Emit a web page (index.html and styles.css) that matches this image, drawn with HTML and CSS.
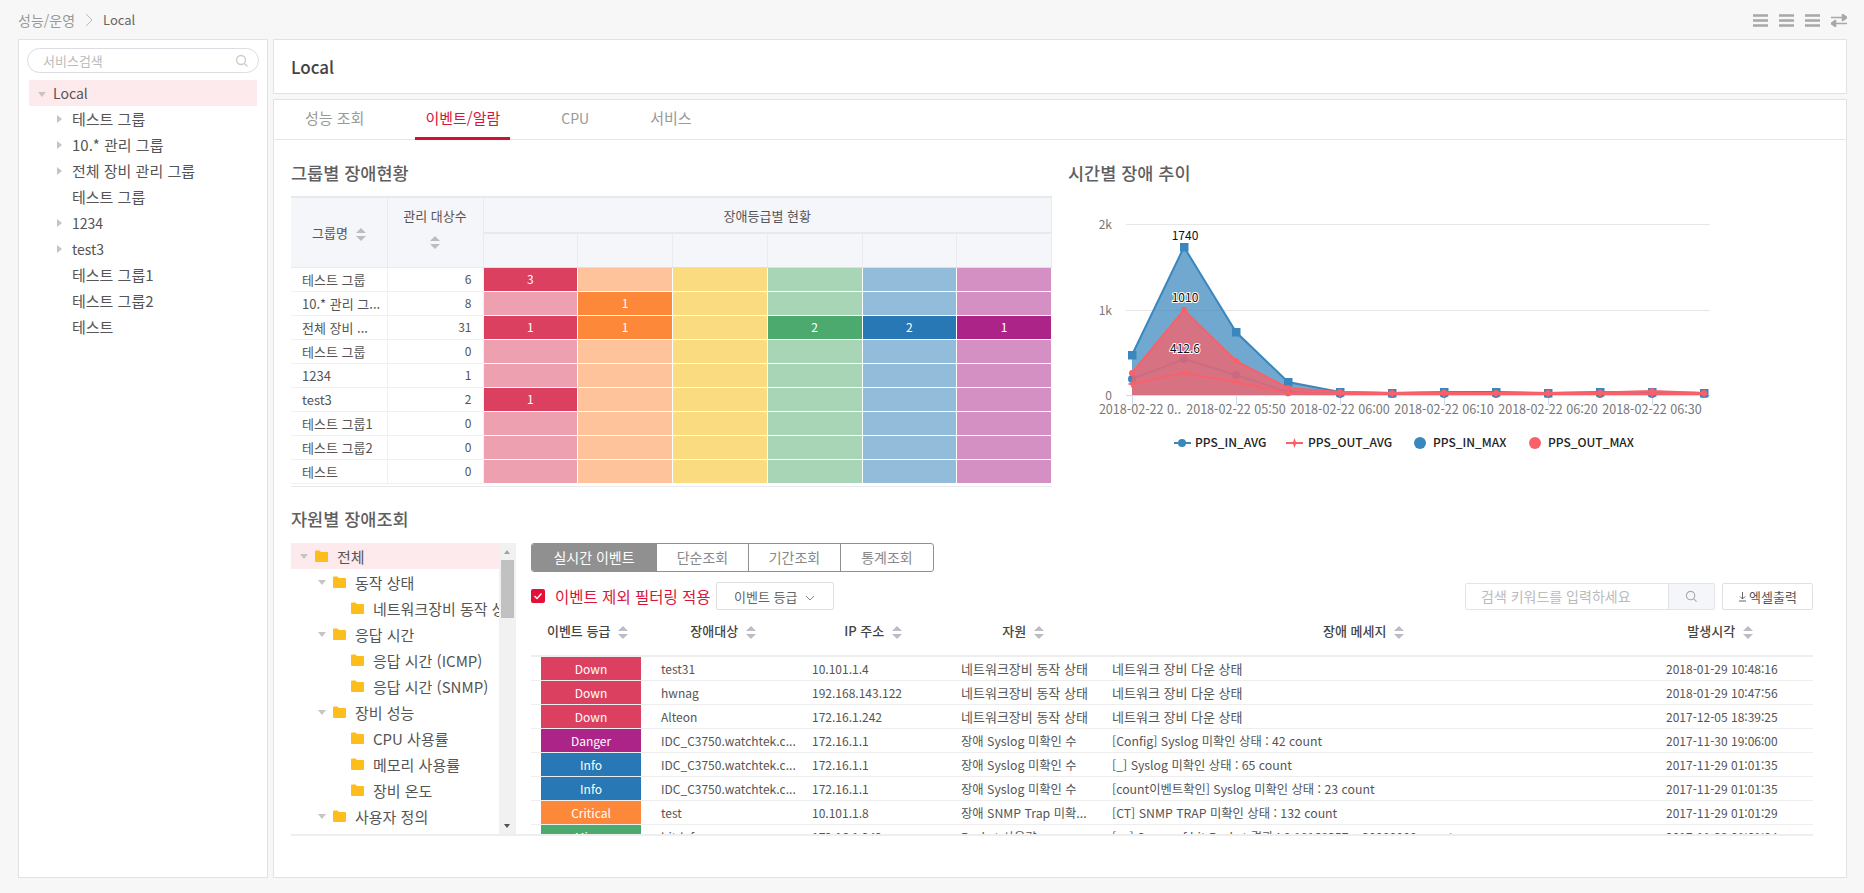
FILE: index.html
```html
<!DOCTYPE html>
<html lang="ko">
<head>
    <meta charset="UTF-8">
    <title>성능/운영 - Local</title>
    <link rel="stylesheet" href="styles.css">
</head>
<body>

<header class="topbar">
    <div class="crumbs">
        <span>성능/운영</span>
        <svg class="crumb-sep" width="8" height="14" viewBox="0 0 8 14"><path d="M1 1l6 6-6 6" fill="none" stroke="#bbb"/></svg>
        <span class="crumb-now">Local</span>
    </div>
    <div class="view-icons">
        <svg width="15" height="13" viewBox="0 0 15 13"><path d="M0 1.500h15M0 6.500h15M0 11.500h15" stroke="#a8a8a8" stroke-width="2.400"/></svg>
        <svg width="15" height="13" viewBox="0 0 15 13"><path d="M0 1.500h15M0 6.500h15M0 11.500h15" stroke="#a8a8a8" stroke-width="2.400"/></svg>
        <svg width="15" height="13" viewBox="0 0 15 13"><path d="M0 1.500h15M0 6.500h15M0 11.500h15" stroke="#a8a8a8" stroke-width="2.400"/></svg>
        <svg width="16" height="13" viewBox="0 0 16 13"><path d="M0 3.500h12M16 3.500l-4.500-3v6zM16 9.500H4M0 9.500l4.500-3v6z" fill="#a8a8a8" stroke="#a8a8a8" stroke-width="1.600" stroke-linejoin="round"/></svg>
    </div>
</header>

<div class="layout">
    <aside class="side panel">
        <div class="side-search">
            <span>서비스검색</span>
            <svg width="14" height="14" viewBox="0 0 14 14"><circle cx="6" cy="6" r="4.500" fill="none" stroke="#ccc" stroke-width="1.300"/><path d="M9.500 9.500l3 3" stroke="#ccc" stroke-width="1.300"/></svg>
        </div>
        <ul class="svc-tree">
            <li class="svc-root"><i class="caret-down"></i>Local</li>
            <li><i class="caret-right"></i>테스트 그룹</li>
            <li><i class="caret-right"></i>10.* 관리 그룹</li>
            <li><i class="caret-right"></i>전체 장비 관리 그룹</li>
            <li>테스트 그룹</li>
            <li class="en"><i class="caret-right"></i>1234</li>
            <li class="en"><i class="caret-right"></i>test3</li>
            <li>테스트 그룹1</li>
            <li>테스트 그룹2</li>
            <li>테스트</li>
        </ul>
    </aside>

    <main class="main">
        <div class="page-title panel"><h1>Local</h1></div>

        <div class="content panel">
            <nav class="tabs">
                <a>성능 조회</a>
                <a class="on">이벤트/알람</a>
                <a class="tab-en">CPU</a>
                <a>서비스</a>
            </nav>

            <div class="body">
                <div class="top-row">
                    <section class="group-status">
                        <h2>그룹별 장애현황</h2>
                        <div class="heat-wrap">
                            <table class="heat">
                                <thead>
                                    <tr>
                                        <th rowspan="2">그룹명 <i class="sort"></i></th>
                                        <th rowspan="2" class="th-wrap">관리 대상수<i class="sort sort-block"></i></th>
                                        <th colspan="6" class="th-span">장애등급별 현황</th>
                                    </tr>
                                    <tr class="th-empty"><th></th><th></th><th></th><th></th><th></th><th></th></tr>
                                </thead>
                                <tbody>
                                    <tr><td>테스트 그룹</td><td class="num">6</td><td class="down">3</td><td class="l-crit"></td><td class="l-major"></td><td class="l-minor"></td><td class="l-info"></td><td class="l-danger"></td></tr>
                                    <tr><td>10.* 관리 그...</td><td class="num">8</td><td class="l-down"></td><td class="crit">1</td><td class="l-major"></td><td class="l-minor"></td><td class="l-info"></td><td class="l-danger"></td></tr>
                                    <tr><td>전체 장비 ...</td><td class="num">31</td><td class="down">1</td><td class="crit">1</td><td class="l-major"></td><td class="minor">2</td><td class="info">2</td><td class="danger">1</td></tr>
                                    <tr><td>테스트 그룹</td><td class="num">0</td><td class="l-down"></td><td class="l-crit"></td><td class="l-major"></td><td class="l-minor"></td><td class="l-info"></td><td class="l-danger"></td></tr>
                                    <tr><td>1234</td><td class="num">1</td><td class="l-down"></td><td class="l-crit"></td><td class="l-major"></td><td class="l-minor"></td><td class="l-info"></td><td class="l-danger"></td></tr>
                                    <tr><td>test3</td><td class="num">2</td><td class="down">1</td><td class="l-crit"></td><td class="l-major"></td><td class="l-minor"></td><td class="l-info"></td><td class="l-danger"></td></tr>
                                    <tr><td>테스트 그룹1</td><td class="num">0</td><td class="l-down"></td><td class="l-crit"></td><td class="l-major"></td><td class="l-minor"></td><td class="l-info"></td><td class="l-danger"></td></tr>
                                    <tr><td>테스트 그룹2</td><td class="num">0</td><td class="l-down"></td><td class="l-crit"></td><td class="l-major"></td><td class="l-minor"></td><td class="l-info"></td><td class="l-danger"></td></tr>
                                    <tr><td>테스트</td><td class="num">0</td><td class="l-down"></td><td class="l-crit"></td><td class="l-major"></td><td class="l-minor"></td><td class="l-info"></td><td class="l-danger"></td></tr>
                                </tbody>
                            </table>
                        </div>
                    </section>

                    <section class="trend">
                        <h2>시간별 장애 추이</h2>
                        <svg class="chart" width="660" height="270" viewBox="1068 196 660 270">
                            <defs>
                                <marker id="m-square" markerUnits="userSpaceOnUse" markerWidth="9" markerHeight="9" refX="4.500" refY="4.500"><rect width="9" height="9" fill="#3a87be"/></marker>
                                <marker id="m-dot" markerUnits="userSpaceOnUse" markerWidth="9" markerHeight="9" refX="4.500" refY="4.500"><circle cx="4.500" cy="4.500" r="4" fill="#3a87be"/></marker>
                                <marker id="m-red" markerUnits="userSpaceOnUse" markerWidth="9" markerHeight="9" refX="4.500" refY="4.500"><circle cx="4.500" cy="4.500" r="3" fill="#fa6069"/></marker>
                                <marker id="m-star" markerUnits="userSpaceOnUse" markerWidth="9" markerHeight="9" refX="4.500" refY="4.500"><path d="M4.500 0l1.200 3.300 3.300 1.200-3.300 1.200-1.200 3.300-1.200-3.300L0 4.500l3.300-1.200z" fill="#fa6069"/></marker>
                            </defs>
                            <g class="grid">
                                <path d="M1126 224.500h584M1126 310.500h584"/>
                                <path class="axis" d="M1126 395.500h584M1132.500 395v10M1236.500 395v10M1340.500 395v10M1444.500 395v10M1548.500 395v10M1652.500 395v10"/>
                            </g>
                            <g class="ax-y">
                                <text x="1112" y="229" text-anchor="end">2k</text>
                                <text x="1112" y="315" text-anchor="end">1k</text>
                                <text x="1112" y="400" text-anchor="end">0</text>
                            </g>
                            <g class="ax-x">
                                <text x="1140" y="414">2018-02-22 0..</text>
                                <text x="1236" y="414">2018-02-22 05:50</text>
                                <text x="1340" y="414">2018-02-22 06:00</text>
                                <text x="1444" y="414">2018-02-22 06:10</text>
                                <text x="1548" y="414">2018-02-22 06:20</text>
                                <text x="1652" y="414">2018-02-22 06:30</text>
                            </g>
                            <polygon class="area-blue" points="1132,395 1132,355 1184,247 1236,332 1288,382 1340,392 1392,393 1444,392 1496,392 1548,393 1600,392 1652,392 1704,393 1704,395"/>
                            <polyline class="line-blue" marker-start="url(#m-square)" marker-mid="url(#m-square)" marker-end="url(#m-square)" points="1132,355 1184,247 1236,332 1288,382 1340,392 1392,393 1444,392 1496,392 1548,393 1600,392 1652,392 1704,393"/>
                            <polyline class="line-avg" marker-start="url(#m-dot)" marker-mid="url(#m-dot)" marker-end="url(#m-dot)" points="1132,379 1184,359 1236,375 1288,392 1340,394 1392,394 1444,394 1496,394 1548,394 1600,394 1652,394 1704,394"/>
                            <polyline class="line-star" marker-start="url(#m-star)" marker-mid="url(#m-star)" marker-end="url(#m-star)" points="1132,384 1184,373 1236,382 1288,393 1340,394 1392,394 1444,394 1496,394 1548,394 1600,394 1652,394 1704,394"/>
                            <polygon class="area-red" points="1132,395 1132,373 1184,310 1236,361 1288,388 1340,392 1392,393 1444,392.500 1496,393 1548,393 1600,392.500 1652,391 1704,393 1704,395"/>
                            <polyline class="line-red" marker-start="url(#m-red)" marker-mid="url(#m-red)" marker-end="url(#m-red)" points="1132,373 1184,310 1236,361 1288,388 1340,392 1392,393 1444,392.500 1496,393 1548,393 1600,392.500 1652,391 1704,393"/>
                            <g class="peak">
                                <text x="1185" y="240">1740</text>
                                <text class="halo" x="1185" y="302">1010</text>
                                <text class="halo" x="1185" y="353">412.6</text>
                            </g>
                            <g class="legend">
                                <path d="M1174 443h17" stroke="#3a87be" stroke-width="2"/><circle cx="1182" cy="443" r="4" fill="#3a87be"/>
                                <text x="1195" y="447">PPS_IN_AVG</text>
                                <path d="M1286 443h17" stroke="#fa6069" stroke-width="2"/><path d="M1294.500 438l1.300 3.700 3.700 1.300-3.700 1.300-1.300 3.700-1.300-3.700-3.700-1.300 3.700-1.300z" fill="#fa6069"/>
                                <text x="1308" y="447">PPS_OUT_AVG</text>
                                <circle cx="1420" cy="443" r="6" fill="#3a87be"/>
                                <text x="1433" y="447">PPS_IN_MAX</text>
                                <circle cx="1535" cy="443" r="6" fill="#fa6069"/>
                                <text x="1548" y="447">PPS_OUT_MAX</text>
                            </g>
                        </svg>
                    </section>
                </div>

                <section class="resource">
                    <h2>자원별 장애조회</h2>
                    <div class="res-body">
                        <div class="res-tree">
                            <ul class="folder-tree">
                                <li class="res-root d0"><i class="caret-down"></i><svg class="folder"><use href="#folder"/></svg>전체</li>
                                <li class="d1"><i class="caret-down"></i><svg class="folder"><use href="#folder"/></svg>동작 상태</li>
                                <li class="d2"><svg class="folder"><use href="#folder"/></svg>네트워크장비 동작 상태</li>
                                <li class="d1"><i class="caret-down"></i><svg class="folder"><use href="#folder"/></svg>응답 시간</li>
                                <li class="d2"><svg class="folder"><use href="#folder"/></svg>응답 시간 (ICMP)</li>
                                <li class="d2"><svg class="folder"><use href="#folder"/></svg>응답 시간 (SNMP)</li>
                                <li class="d1"><i class="caret-down"></i><svg class="folder"><use href="#folder"/></svg>장비 성능</li>
                                <li class="d2"><svg class="folder"><use href="#folder"/></svg>CPU 사용률</li>
                                <li class="d2"><svg class="folder"><use href="#folder"/></svg>메모리 사용률</li>
                                <li class="d2"><svg class="folder"><use href="#folder"/></svg>장비 온도</li>
                                <li class="d1"><i class="caret-down"></i><svg class="folder"><use href="#folder"/></svg>사용자 정의</li>
                            </ul>
                            <div class="scrollbar">
                                <i class="arrow-up"></i>
                                <div class="thumb"></div>
                                <i class="arrow-down"></i>
                            </div>
                        </div>

                        <div class="events">
                            <div class="ev-tabs">
                                <a class="on">실시간 이벤트</a>
                                <a>단순조회</a>
                                <a>기간조회</a>
                                <a>통계조회</a>
                            </div>
                            <div class="ev-filter">
                                <span class="check"><svg width="10" height="10" viewBox="0 0 10 10"><path d="M1.500 5l2.500 2.500 4.500-5" fill="none" stroke="#fff" stroke-width="1.300"/></svg></span>
                                <span class="check-label">이벤트 제외 필터링 적용</span>
                                <button class="grade-btn">이벤트 등급
                                    <svg width="10" height="6" viewBox="0 0 10 6"><path d="M1 1l4 4 4-4" fill="none" stroke="#888"/></svg>
                                </button>
                                <div class="ev-search">
                                    <span class="ev-input">검색 키워드를 입력하세요</span>
                                    <span class="ev-go"><svg width="13" height="13" viewBox="0 0 14 14"><circle cx="6" cy="6" r="4.500" fill="none" stroke="#aaa" stroke-width="1.200"/><path d="M9.500 9.500l3 3" stroke="#aaa" stroke-width="1.200"/></svg></span>
                                </div>
                                <button class="excel-btn">
                                    <svg width="9" height="11" viewBox="0 0 9 11"><path d="M4.500 1v7M2 5.500l2.500 2.500L7 5.500M1 10h7" fill="none" stroke="#666"/></svg>엑셀출력
                                </button>
                            </div>
                            <div class="ev-table-wrap">
                                <table class="ev-table">
                                    <colgroup>
                                        <col class="c-grade"><col class="c-target"><col class="c-ip"><col class="c-res"><col class="c-msg"><col class="c-time">
                                    </colgroup>
                                    <thead>
                                        <tr>
                                            <th>이벤트 등급 <i class="sort"></i></th>
                                            <th>장애대상 <i class="sort"></i></th>
                                            <th>IP 주소 <i class="sort"></i></th>
                                            <th>자원 <i class="sort"></i></th>
                                            <th class="th-msg">장애 메세지 <i class="sort"></i></th>
                                            <th class="th-time">발생시각 <i class="sort"></i></th>
                                        </tr>
                                    </thead>
                                    <tbody>
                                        <tr><td><div class="badge down">Down</div></td><td>test31</td><td>10.101.1.4</td><td class="ko">네트워크장비 동작 상태</td><td class="ko">네트워크 장비 다운 상태</td><td>2018-01-29 10:48:16</td></tr>
                                        <tr><td><div class="badge down">Down</div></td><td>hwnag</td><td>192.168.143.122</td><td class="ko">네트워크장비 동작 상태</td><td class="ko">네트워크 장비 다운 상태</td><td>2018-01-29 10:47:56</td></tr>
                                        <tr><td><div class="badge down">Down</div></td><td>Alteon</td><td>172.16.1.242</td><td class="ko">네트워크장비 동작 상태</td><td class="ko">네트워크 장비 다운 상태</td><td>2017-12-05 18:39:25</td></tr>
                                        <tr><td><div class="badge danger">Danger</div></td><td>IDC_C3750.watchtek.c...</td><td>172.16.1.1</td><td class="mix">장애 Syslog 미확인 수</td><td class="mix">[Config] Syslog 미확인 상태 : 42 count</td><td>2017-11-30 19:06:00</td></tr>
                                        <tr><td><div class="badge info">Info</div></td><td>IDC_C3750.watchtek.c...</td><td>172.16.1.1</td><td class="mix">장애 Syslog 미확인 수</td><td class="mix">[_] Syslog 미확인 상태 : 65 count</td><td>2017-11-29 01:01:35</td></tr>
                                        <tr><td><div class="badge info">Info</div></td><td>IDC_C3750.watchtek.c...</td><td>172.16.1.1</td><td class="mix">장애 Syslog 미확인 수</td><td class="mix">[count이벤트확인] Syslog 미확인 상태 : 23 count</td><td>2017-11-29 01:01:35</td></tr>
                                        <tr><td><div class="badge crit">Critical</div></td><td>test</td><td>10.101.1.8</td><td class="mix">장애 SNMP Trap 미확...</td><td class="mix">[CT] SNMP TRAP 미확인 상태 : 132 count</td><td>2017-11-29 01:01:29</td></tr>
                                        <tr><td><div class="badge minor">Minor</div></td><td>bitdefs</td><td>172.16.1.242</td><td class="mix">Packet 사용량</td><td class="mix">[ps] Space of bit Packet 결과 : 0.18168357 &gt; 20000000 count</td><td>2017-11-29 01:01:04</td></tr>
                                    </tbody>
                                </table>
                            </div>
                        </div>
                    </div>
                </section>
            </div>
        </div>
    </main>
</div>

<svg class="defs" width="0" height="0">
    <symbol id="folder" viewBox="0 0 13 12">
        <path d="M0 1.500Q0 .5 1 .5h3.500l1.500 1.500h6q1 0 1 1V11q0 1-1 1H1q-1 0-1-1z" fill="#fdbd1c"/>
    </symbol>
</svg>

</body>
</html>
```

FILE: styles.css
```css
* {
    box-sizing: border-box;
}

html, body {
    height: 100%;
}

body {
    margin: 0;
    padding: 0 17px 15px 18px;
    overflow: hidden;
    display: flex;
    flex-direction: column;
    background-color: #f7f7f7;
    font-family: "Noto Sans CJK KR", "Noto Sans", sans-serif;
    font-size: 12px;
    color: #555;
}

ul {
    list-style: none;
    margin: 0;
    padding: 0;
}

h1, h2 {
    margin: 0;
    font-weight: 500;
}

button {
    font-family: inherit;
    cursor: pointer;
}

.defs {
    position: absolute;
}

.panel {
    background-color: #fff;
    border: 1px solid #e2e2e2;
}

/* topbar */
.topbar {
    height: 39px;
    flex: none;
    display: flex;
    align-items: center;
    justify-content: space-between;
}

.crumbs {
    display: flex;
    align-items: center;
    gap: 10px;
    font-size: 14px;
    color: #999;
}

.crumb-now {
    color: #666;
    font-size: 13px;
}

.view-icons {
    display: flex;
    align-items: center;
    gap: 11px;
    margin-top: 2px;
}

.layout {
    flex: 1;
    min-height: 0;
    display: flex;
    gap: 5px;
}

/* left tree */
.side {
    width: 250px;
    flex: none;
    padding: 8px;
}

.side-search {
    height: 25px;
    display: flex;
    align-items: center;
    justify-content: space-between;
    padding: 0 9px 0 15px;
    border: 1px solid #dcdce2;
    border-radius: 13px;
    color: #bbb;
    font-size: 13px;
}

.svc-tree {
    margin: 7px 2px 0;
}

.svc-tree li {
    position: relative;
    height: 26px;
    line-height: 26px;
    padding-left: 43px;
    font-size: 15px;
    color: #555;
}

.svc-tree .en {
    font-size: 14px;
}

.svc-tree .svc-root {
    padding-left: 24px;
    background-color: #fdeaec;
    font-size: 14px;
}

.svc-root .caret-down {
    top: 12px;
}

.caret-right, .caret-down {
    position: absolute;
    width: 0;
    height: 0;
}

.caret-right {
    left: 28px;
    top: 9px;
    border-left: 5px solid #c4c4c4;
    border-top: 4px solid transparent;
    border-bottom: 4px solid transparent;
}

.caret-down {
    left: 9px;
    top: 10px;
    border-top: 5px solid #c4c4c4;
    border-left: 4px solid transparent;
    border-right: 4px solid transparent;
}

.main {
    flex: 1;
    min-width: 0;
    display: flex;
    flex-direction: column;
    gap: 5px;
}

.page-title {
    height: 55px;
    flex: none;
    display: flex;
    align-items: center;
    padding-left: 17px;
}

.page-title h1 {
    font-size: 17px;
    color: #444;
}

.content {
    flex: 1;
    min-height: 0;
}

/* tabs */
.tabs {
    height: 40px;
    display: flex;
    gap: 41px;
    padding-left: 21px;
    border-bottom: 1px solid #e6e6e6;
    font-size: 15px;
    color: #999;
}

.tabs a {
    height: 40px;
    padding: 0 10px;
    line-height: 36px;
}

.tabs .tab-en {
    font-size: 14px;
}

.tabs a.on {
    color: #d8143a;
    border-bottom: 3px solid #d0112f;
}

.body {
    padding: 19px 33px 0 17px;
}

.body h2 {
    font-size: 17.500px;
    line-height: 28px;
    color: #5f5f5f;
}

.top-row {
    display: flex;
    gap: 16px;
    height: 347px;
}

.group-status {
    width: 761px;
    flex: none;
}

.trend {
    flex: 1;
    min-width: 0;
}

.chart {
    display: block;
    margin-top: 9px;
}

/* heatmap table */
.heat-wrap {
    height: 291px;
    margin-top: 9px;
    border-top: 2px solid #e8e9ee;
    border-bottom: 1px solid #e8e9ee;
    overflow: hidden;
}

.heat {
    width: 761px;
    table-layout: fixed;
    border-collapse: collapse;
}

.heat th {
    background-color: #f5f6fa;
    border: 1px solid #eaebf0;
    border-top: 0;
    border-left: 0;
    font-weight: 400;
    font-size: 13px;
    color: #555;
}

.heat th:nth-child(1), .heat td:nth-child(1), .heat th:nth-child(2), .heat td:nth-child(2) {
    width: 96px;
}

.heat .th-span {
    height: 35px;
    border-bottom: 2px solid #e8e9ee;
    vertical-align: top;
    padding-top: 8px;
}

.heat .th-empty th {
    height: 34px;
    border-bottom: 1px solid #dfe0e6;
}

.heat .th-wrap {
    vertical-align: top;
    padding-top: 8px;
}

.heat td {
    height: 24px;
    padding: 0;
    border: 1px solid #fff;
    text-align: center;
    color: #fff;
    line-height: 1;
}

.heat td:nth-child(1), .heat td:nth-child(2) {
    color: #555;
    border: 0;
    border-right: 1px solid #eef0f3;
    border-bottom: 1px solid #eef0f3;
}

.heat td:nth-child(1) {
    text-align: left;
    padding-left: 11px;
    font-size: 13px;
}

.heat td.num {
    text-align: right;
    padding-right: 11px;
}

.down { background-color: #db4060; color: #fff; }
.crit { background-color: #fe883a; color: #fff; }
.minor { background-color: #4daa6e; color: #fff; }
.info { background-color: #2878b5; color: #fff; }
.danger { background-color: #ad2489; color: #fff; }
.l-down { background-color: #eda0b0; }
.l-crit { background-color: #fec39b; }
.l-major { background-color: #fbdb7f; }
.l-minor { background-color: #a7d5b5; }
.l-info { background-color: #93bbda; }
.l-danger { background-color: #d48fc3; }

/* sort arrows */
.sort {
    display: inline-block;
    position: relative;
    width: 10px;
    height: 13px;
    margin-left: 4px;
    vertical-align: middle;
}

.sort::before, .sort::after {
    content: "";
    position: absolute;
    left: 0;
    border-left: 5px solid transparent;
    border-right: 5px solid transparent;
}

.sort::before {
    top: 0;
    border-bottom: 5px solid #bbbcc4;
}

.sort::after {
    bottom: 0;
    border-top: 5px solid #bbbcc4;
}

.sort-block {
    display: block;
    margin: 11px auto 0;
}

/* resource section */
.resource h2 {
    line-height: 26px;
}

.res-body {
    display: flex;
    gap: 15px;
    height: 293px;
    margin-top: 11px;
    border-bottom: 2px solid #eee;
}

.res-tree {
    width: 225px;
    flex: none;
    display: flex;
    overflow: hidden;
}

.folder-tree {
    width: 208px;
    flex: none;
    overflow: hidden;
}

.folder-tree li {
    position: relative;
    display: flex;
    align-items: center;
    height: 26px;
    white-space: nowrap;
    font-size: 15px;
    color: #555;
}

.folder-tree .caret-down {
    top: 11px;
}

.folder {
    width: 13px;
    height: 12px;
    margin-right: 9px;
    flex: none;
}

.res-root {
    background-color: #fdeaec;
}

.d0 { padding-left: 24px; }
.d0 .caret-down { left: 9px; }
.d1 { padding-left: 42px; }
.d1 .caret-down { left: 27px; }
.d2 { padding-left: 60px; }

.scrollbar {
    width: 17px;
    flex: none;
    position: relative;
    background-color: #f1f1f1;
}

.thumb {
    position: absolute;
    left: 2px;
    right: 2px;
    top: 17px;
    height: 58px;
    background-color: #c1c1c1;
}

.arrow-up, .arrow-down {
    position: absolute;
    left: 5px;
    border-left: 3.500px solid transparent;
    border-right: 3.500px solid transparent;
}

.arrow-up {
    top: 7px;
    border-bottom: 4px solid #a3a3a3;
}

.arrow-down {
    bottom: 6px;
    border-top: 4px solid #505050;
}

/* events */
.events {
    flex: 1;
    min-width: 0;
    display: flex;
    flex-direction: column;
}

.ev-tabs {
    display: flex;
    width: 403px;
    height: 29px;
    flex: none;
    border: 1px solid #909090;
    border-radius: 3px;
    overflow: hidden;
}

.ev-tabs a {
    width: 92px;
    text-align: center;
    line-height: 27px;
    font-size: 14px;
    color: #888;
    border-right: 1px solid #909090;
}

.ev-tabs a:last-child {
    border-right: 0;
    flex: 1;
}

.ev-tabs a.on {
    width: 125px;
    background-color: #909090;
    color: #fff;
}

.ev-filter {
    display: flex;
    align-items: center;
    height: 28px;
    flex: none;
    margin-top: 10px;
}

.check {
    width: 14px;
    height: 14px;
    display: flex;
    align-items: center;
    justify-content: center;
    background-color: #e4103a;
    border-radius: 2px;
}

.check-label {
    margin-left: 10px;
    font-size: 15.500px;
    color: #d8143a;
}

.grade-btn {
    width: 118px;
    height: 28px;
    margin-left: 5px;
    background-color: #fff;
    border: 1px solid #e0e0e0;
    border-radius: 2px;
    font-size: 13px;
    color: #666;
}

.grade-btn svg {
    margin-left: 4px;
    vertical-align: middle;
}

.ev-search {
    display: flex;
    width: 250px;
    height: 27px;
    margin-left: auto;
    border: 1px solid #e4e4e8;
    border-radius: 2px;
}

.ev-input {
    flex: 1;
    padding-left: 15px;
    line-height: 25px;
    font-size: 14px;
    color: #bbb;
}

.ev-go {
    width: 46px;
    display: flex;
    align-items: center;
    justify-content: center;
    background-color: #f5f6fa;
    border-left: 1px solid #e4e4e8;
}

.excel-btn {
    width: 91px;
    height: 27px;
    margin-left: 7px;
    background-color: #fff;
    border: 1px solid #e0e0e0;
    border-radius: 2px;
    font-size: 13px;
    color: #555;
}

.excel-btn svg {
    margin-right: 2px;
}

.ev-table-wrap {
    flex: 1;
    min-height: 0;
    overflow: hidden;
}

.ev-table {
    width: 100%;
    table-layout: fixed;
    border-collapse: collapse;
}

.c-grade { width: 120px; }
.c-target { width: 151px; }
.c-ip { width: 149px; }
.c-res { width: 151px; }
.c-msg { width: 554px; }

.ev-table th {
    height: 46px;
    padding: 0 7px 4px 0;
    border-bottom: 2px solid #eee;
    font-weight: 500;
    font-size: 13px;
    color: #444;
}

.ev-table .th-msg {
    padding-right: 31px;
}

.ev-table .th-time {
    padding-right: 29px;
}

.ev-table td {
    height: 24px;
    padding: 0 10px;
    border-bottom: 1px solid #eee;
    white-space: nowrap;
    overflow: hidden;
    color: #555;
}

.ev-table td.ko {
    font-size: 13px;
}

.ev-table td.mix {
    font-size: 12.300px;
}

.badge {
    height: 23px;
    line-height: 23px;
    text-align: center;
    font-size: 12px;
}

/* chart */
.grid path {
    stroke: #e6e6e6;
    fill: none;
}

.grid .axis {
    stroke: #c8dbec;
}

.chart text {
    font-family: "Noto Sans CJK KR", "Noto Sans", sans-serif;
    font-size: 12px;
}

.ax-y text, .ax-x text {
    fill: #777;
}

.chart .ax-x text {
    text-anchor: middle;
    font-size: 12.600px;
}

.area-blue {
    fill: #3a87be;
    fill-opacity: 0.72;
}

.area-red {
    fill: #fa6069;
    fill-opacity: 0.75;
}

.line-blue, .line-avg {
    fill: none;
    stroke: #3a87be;
    stroke-width: 2;
}

.line-avg {
    stroke-opacity: 0.8;
}

.line-red, .line-star {
    fill: none;
    stroke: #fa6069;
    stroke-width: 2;
}

.peak text {
    text-anchor: middle;
    fill: #111;
}

.peak .halo {
    stroke: #fff;
    stroke-width: 2px;
    paint-order: stroke;
}

.legend text {
    fill: #222;
    font-weight: 500;
}
```
